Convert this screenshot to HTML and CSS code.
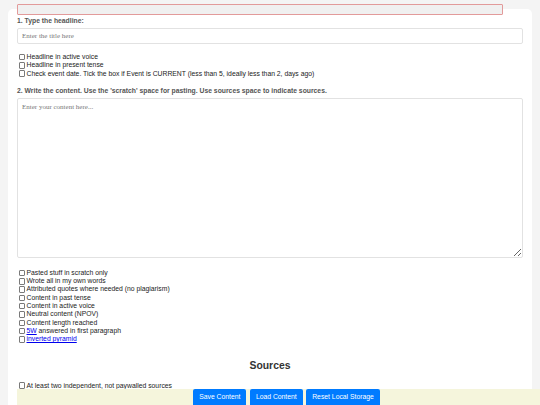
FILE: index.html
```html
<!DOCTYPE html>
<html lang="en">
<head>
<meta charset="utf-8">
<title>Article checklist</title>
<link rel="stylesheet" href="styles.css">
</head>
<body>
<input class="scratch" type="text" aria-label="scratch">
<main class="card">
  <label class="step" for="title">1. Type the headline:</label>
  <input id="title" class="field" type="text" placeholder="Enter the title here">
  <div class="checks first">
    <label class="check"><input type="checkbox"><span>Headline in active voice</span></label>
    <label class="check"><input type="checkbox"><span>Headline in present tense</span></label>
    <label class="check"><input type="checkbox"><span>Check event date. Tick the box if Event is CURRENT (less than 5, ideally less than 2, days ago)</span></label>
  </div>
  <label class="step second" for="content">2. Write the content. Use the 'scratch' space for pasting. Use sources space to indicate sources.</label>
  <textarea id="content" class="area" placeholder="Enter your content here..."></textarea>
  <div class="checks list">
    <label class="check"><input type="checkbox"><span>Pasted stuff in scratch only</span></label>
    <label class="check"><input type="checkbox"><span>Wrote all in my own words</span></label>
    <label class="check"><input type="checkbox"><span>Attributed quotes where needed (no plagiarism)</span></label>
    <label class="check"><input type="checkbox"><span>Content in past tense</span></label>
    <label class="check"><input type="checkbox"><span>Content in active voice</span></label>
    <label class="check"><input type="checkbox"><span>Neutral content (NPOV)</span></label>
    <label class="check"><input type="checkbox"><span>Content length reached</span></label>
    <label class="check"><input type="checkbox"><span><a href="#">5W</a> answered in first paragraph</span></label>
    <label class="check"><input type="checkbox"><span><a href="#">inverted pyramid</a></span></label>
  </div>
  <h3 class="section">Sources</h3>
  <div class="checks">
    <label class="check"><input type="checkbox"><span>At least two independent, not paywalled sources</span></label>
  </div>
</main>
<div class="actions">
  <button class="btn" type="button">Save Content</button>
  <button class="btn" type="button">Load Content</button>
  <button class="btn" type="button">Reset Local Storage</button>
</div>
</body>
</html>
```
FILE: styles.css
```css
html, body {
  margin: 0;
  padding: 0;
}
body {
  background: #f4f4f4;
  font-family: "Liberation Sans", Arial, sans-serif;
  color: #222;
  padding: 9px 8px 0 8px;
}
.card {
  background: #fff;
  border-radius: 5px;
  padding: 7px 9px 60px 9px;
  display: flex;
  flex-direction: column;
}
.scratch {
  position: fixed;
  top: 4px;
  left: 17px;
  width: 486px;
  height: 11px;
  box-sizing: border-box;
  margin: 0;
  padding: 0;
  background: #f0f0f0;
  border: 1px solid #e29a9a;
  border-radius: 1px;
  z-index: 2;
}
.step {
  display: block;
  font-size: 6.8px;
  font-weight: bold;
  color: #555;
  line-height: 10px;
  margin-bottom: 2px;
}
.step.second {
  margin-top: 8px;
}
.field {
  box-sizing: border-box;
  height: 16px;
  width: 100%;
  margin: 0;
  padding: 0 4px;
  border: 1px solid #e2e2e2;
  border-radius: 2px;
  font-family: "Liberation Serif", "Times New Roman", serif;
  font-size: 7px;
  color: #333;
  background: #fff;
}
.field::placeholder,
.area::placeholder {
  color: #777;
}
.area {
  box-sizing: border-box;
  display: block;
  width: 100%;
  height: 160px;
  margin: 0;
  padding: 4px 4px;
  border: 1px solid #e2e2e2;
  border-radius: 2px;
  font-family: "Liberation Serif", "Times New Roman", serif;
  font-size: 7px;
  color: #333;
  resize: vertical;
}
.checks {
  display: flex;
  flex-direction: column;
}
.checks.first {
  margin-top: 9px;
}
.checks.list {
  margin-top: 11px;
}
.check {
  display: flex;
  align-items: center;
  font-size: 6.8px;
  line-height: 8.3px;
  color: #222;
}
.check input {
  appearance: none;
  -webkit-appearance: none;
  width: 6.5px;
  height: 6.5px;
  box-sizing: border-box;
  margin: 0 1.5px 0 1.5px;
  border: 0.8px solid #7a7a7a;
  border-radius: 1px;
  background: #fff;
  flex: none;
}
.check a {
  color: #0000ee;
  text-decoration: underline;
}
.section {
  margin: 16px 0 10px 0;
  text-align: center;
  font-size: 10.4px;
  line-height: 12px;
  font-weight: bold;
  color: #333;
}
.actions {
  position: fixed;
  left: 17px;
  bottom: 0;
  width: 100%;
  height: 16px;
  box-sizing: border-box;
  padding-right: 1px;
  background: #f5f5dc;
  display: flex;
  justify-content: center;
  align-items: flex-start;
  gap: 3.5px;
  z-index: 2;
}
.btn {
  margin: 0;
  height: 18px;
  padding: 0 6px;
  border: none;
  border-radius: 2px;
  background: #007bff;
  color: #fff;
  font-family: "Liberation Sans", Arial, sans-serif;
  font-size: 6.8px;
  line-height: 16px;
  display: flex;
  align-items: flex-start;
}
```
